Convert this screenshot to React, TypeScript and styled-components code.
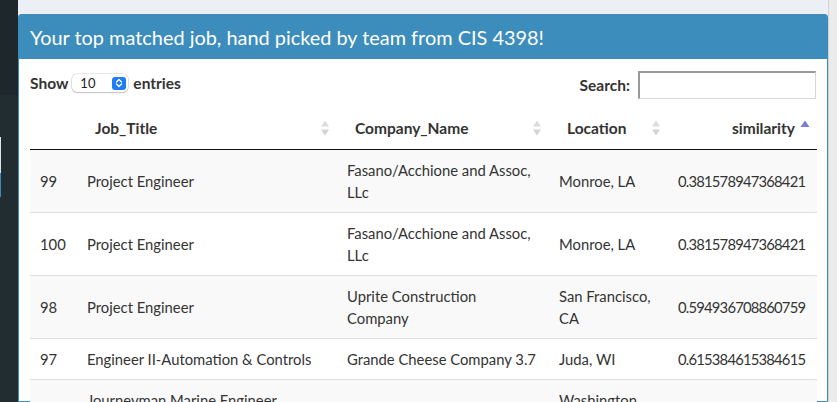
import styled, { createGlobalStyle } from "styled-components";

const GlobalStyle = createGlobalStyle`
  html, body {
    margin: 0;
    padding: 0;
    overflow: hidden;
  }
  body {
    font-family: Lato, "Liberation Sans", sans-serif;
    color: #333;
    background: #ecf0f5;
  }
`;

const Page = styled.div`
  display: flex;
  width: 837px;
  height: 402px;
  overflow: hidden;
`;

const Sidebar = styled.aside`
  width: 18px;
  flex-shrink: 0;
  background: #222d32;
  display: flex;
  flex-direction: column;
`;

const SidebarTop = styled.div`
  height: 95px;
  background: #1e282c;
`;

const SidebarForm = styled.div`
  margin-top: 42px;
  display: flex;
  flex-direction: column;
`;

const SidebarInput = styled.div`
  width: 1px;
  height: 36px;
  background: #dfe3e5;
`;

const SidebarButton = styled.div`
  width: 1px;
  height: 24px;
  background: #3c8dbc;
`;

const Content = styled.main`
  flex: 1;
  min-width: 0;
  display: flex;
  padding-top: 14px;
  background: #ecf0f5;
`;

const Scrollbar = styled.div`
  width: 8px;
  flex-shrink: 0;
  background: #ebebeb;
  border-left: 1px solid #d2d2d2;
`;

const Box = styled.section`
  flex: 1;
  min-width: 0;
  background: #fff;
  border: 1px solid #3c8dbc;
  border-radius: 3px 3px 0 0;
`;

const BoxHeader = styled.header`
  height: 44px;
  display: flex;
  align-items: center;
  padding: 0 11px;
  background: #3c8dbc;
  color: #fff;
  font-size: 19.9px;
`;

const BoxBody = styled.div`
  padding: 12px 11px;
`;

const Controls = styled.div`
  display: flex;
  align-items: flex-start;
  justify-content: space-between;
  height: 28px;
`;

const ControlLabel = styled.label<{ $offset?: number }>`
  display: flex;
  align-items: center;
  gap: 5px;
  margin-top: ${(p) => p.$offset ?? 0}px;
  font-size: 15.5px;
  font-weight: 700;
  color: #333;
`;

const Select = styled.div`
  width: 56px;
  height: 18px;
  box-sizing: border-box;
  display: flex;
  align-items: center;
  justify-content: space-between;
  margin-left: -1px;
  padding: 0 2px 0 8px;
  border-radius: 5px;
  background: #fff;
  box-shadow: 0 0 0 0.5px rgba(0, 0, 0, 0.18), 0 1px 1.5px rgba(0, 0, 0, 0.18);
  font-size: 13px;
  font-weight: 400;
  color: #222;
`;

const Stepper = styled.span`
  width: 14px;
  height: 13px;
  border-radius: 3px;
  background: #1f7cf6;
  display: flex;
  align-items: center;
  justify-content: center;
`;

const SearchInput = styled.input`
  width: 178px;
  height: 28px;
  box-sizing: border-box;
  margin-left: 3px;
  border: 1px solid #d6d6d6;
  border-top: 2px solid #9a9a9a;
  border-left: 2px solid #9a9a9a;
  background: #fff;
  outline: none;
`;

const Table = styled.table`
  width: 100%;
  margin-top: 8px;
  border-collapse: collapse;
  table-layout: fixed;
  font-size: 14.8px;
  line-height: 22px;
  color: #333;

  tbody tr:first-child td {
    border-top: 0;
  }
`;

const HeadCell = styled.th<{ $right?: boolean }>`
  padding: 10px 7px 10px 18px;
  border-bottom: 1px solid #111;
  font-size: 15.5px;
  font-weight: 700;
  text-align: ${(p) => (p.$right ? "right" : "left")};
`;

const HeadInner = styled.div<{ $right?: boolean }>`
  display: flex;
  align-items: center;
  justify-content: ${(p) => (p.$right ? "flex-end" : "space-between")};
  gap: 5px;
`;

const Row = styled.tr<{ $striped: boolean }>`
  background: ${(p) => (p.$striped ? "#f9f9f9" : "#fff")};
`;

const Cell = styled.td<{ $numeric?: boolean }>`
  padding: 9px ${(p) => (p.$numeric ? 12 : 10)}px 9px 10px;
  border-top: 1px solid #ddd;
  vertical-align: middle;
  text-align: ${(p) => (p.$numeric ? "right" : "left")};
  letter-spacing: ${(p) => (p.$numeric ? "-0.8px" : "normal")};
  overflow: hidden;
`;

const SortIcon = ({ dir }: { dir?: "asc" }) =>
  dir === "asc" ? (
    <svg width="10" height="16" viewBox="0 0 10 16">
      <polygon points="5,0.5 9.5,7 0.5,7" fill="#7b7bdc" />
    </svg>
  ) : (
    <svg width="10" height="16" viewBox="0 0 10 16">
      <polygon points="5,0.5 9,6.5 1,6.5" fill="#dcdcdc" />
      <polygon points="1,9.5 9,9.5 5,15.5" fill="#d4d4d4" />
    </svg>
  );

type Job = {
  id: number;
  title: string;
  company: string;
  location: string;
  similarity: string;
};

const jobs: Job[] = [
  {
    id: 99,
    title: "Project Engineer",
    company: "Fasano/Acchione and Assoc, LLc",
    location: "Monroe, LA",
    similarity: "0.381578947368421",
  },
  {
    id: 100,
    title: "Project Engineer",
    company: "Fasano/Acchione and Assoc, LLc",
    location: "Monroe, LA",
    similarity: "0.381578947368421",
  },
  {
    id: 98,
    title: "Project Engineer",
    company: "Uprite Construction Company",
    location: "San Francisco, CA",
    similarity: "0.594936708860759",
  },
  {
    id: 97,
    title: "Engineer II-Automation & Controls",
    company: "Grande Cheese Company 3.7",
    location: "Juda, WI",
    similarity: "0.615384615384615",
  },
  {
    id: 96,
    title: "Journeyman Marine Engineer Supervisor",
    company: "Naval Sea Systems",
    location: "Washington Navy Yard, DC",
    similarity: "0.642857142857143",
  },
];

const columns = [
  { key: "Job_Title", width: 260 },
  { key: "Company_Name", width: 212 },
  { key: "Location", width: 119 },
];

export default function App() {
  return (
    <Page>
      <GlobalStyle />
      <Sidebar>
        <SidebarTop />
        <SidebarForm>
          <SidebarInput />
          <SidebarButton />
        </SidebarForm>
      </Sidebar>
      <Content>
        <Box>
          <BoxHeader>Your top matched job, hand picked by team from CIS 4398!</BoxHeader>
          <BoxBody>
            <Controls>
              <ControlLabel $offset={3}>
                Show
                <Select>
                  10
                  <Stepper>
                    <svg width="8" height="10" viewBox="0 0 8 10">
                      <path
                        d="M1.5 4 L4 1.5 L6.5 4 M1.5 6 L4 8.5 L6.5 6"
                        fill="none"
                        stroke="#fff"
                        strokeWidth="1.3"
                        strokeLinecap="round"
                        strokeLinejoin="round"
                      />
                    </svg>
                  </Stepper>
                </Select>
                entries
              </ControlLabel>
              <ControlLabel>
                Search:
                <SearchInput type="search" />
              </ControlLabel>
            </Controls>
            <Table>
              <colgroup>
                <col style={{ width: 47 }} />
                {columns.map((c) => (
                  <col key={c.key} style={{ width: c.width }} />
                ))}
                <col style={{ width: 149 }} />
              </colgroup>
              <thead>
                <tr>
                  <HeadCell />
                  {columns.map((c) => (
                    <HeadCell key={c.key}>
                      <HeadInner>
                        {c.key}
                        <SortIcon />
                      </HeadInner>
                    </HeadCell>
                  ))}
                  <HeadCell $right>
                    <HeadInner $right>
                      similarity
                      <SortIcon dir="asc" />
                    </HeadInner>
                  </HeadCell>
                </tr>
              </thead>
              <tbody>
                {jobs.map((job, i) => (
                  <Row key={job.id} $striped={i % 2 === 0}>
                    <Cell>{job.id}</Cell>
                    <Cell>{job.title}</Cell>
                    <Cell>{job.company}</Cell>
                    <Cell>{job.location}</Cell>
                    <Cell $numeric>{job.similarity}</Cell>
                  </Row>
                ))}
              </tbody>
            </Table>
          </BoxBody>
        </Box>
      </Content>
      <Scrollbar />
    </Page>
  );
}
